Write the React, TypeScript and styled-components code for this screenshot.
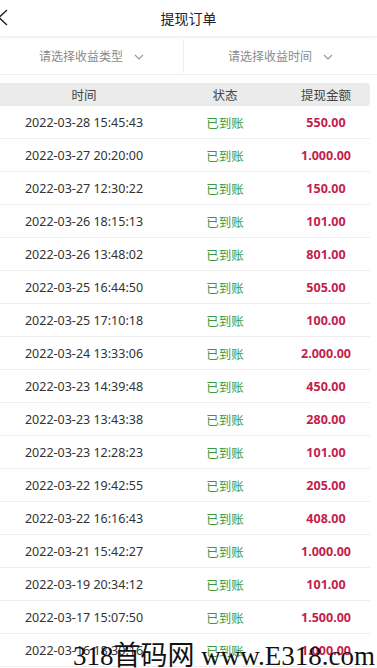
import React, { FunctionComponent } from 'react';
import styled, { createGlobalStyle } from 'styled-components';

const GlobalStyle = createGlobalStyle`
  html, body {
    margin: 0;
    padding: 0;
    background: #fff;
    overflow: hidden;
  }
  body {
    font-family: "Noto Sans", "Noto Sans CJK SC", sans-serif;
    color: #333;
  }
`;

type Order = {
  time: string;
  amount: string;
};

const orders: Order[] = [
  { time: '2022-03-28 15:45:43', amount: '550.00' },
  { time: '2022-03-27 20:20:00', amount: '1.000.00' },
  { time: '2022-03-27 12:30:22', amount: '150.00' },
  { time: '2022-03-26 18:15:13', amount: '101.00' },
  { time: '2022-03-26 13:48:02', amount: '801.00' },
  { time: '2022-03-25 16:44:50', amount: '505.00' },
  { time: '2022-03-25 17:10:18', amount: '100.00' },
  { time: '2022-03-24 13:33:06', amount: '2.000.00' },
  { time: '2022-03-23 14:39:48', amount: '450.00' },
  { time: '2022-03-23 13:43:38', amount: '280.00' },
  { time: '2022-03-23 12:28:23', amount: '101.00' },
  { time: '2022-03-22 19:42:55', amount: '205.00' },
  { time: '2022-03-22 16:16:43', amount: '408.00' },
  { time: '2022-03-21 15:42:27', amount: '1.000.00' },
  { time: '2022-03-19 20:34:12', amount: '101.00' },
  { time: '2022-03-17 15:07:50', amount: '1.500.00' },
  { time: '2022-03-16 18:30:16', amount: '1.000.00' },
];

const Page = styled.div`
    position: relative;
    width: 377px;
    height: 668px;
    overflow: hidden;
    background: #fff;
  `,
  NavBar = styled.header`
    position: relative;
    z-index: 2;
    height: 36px;
    display: flex;
    align-items: center;
    justify-content: center;
    background: #fff;
    box-shadow: 0 1px 3px rgba(0, 0, 0, 0.1);
  `,
  BackButton = styled.svg`
    position: absolute;
    left: -3px;
    top: 9px;
    width: 12px;
    height: 17px;
    fill: none;
    stroke: #222;
    stroke-width: 1.4px;
  `,
  Title = styled.h1`
    margin: 0;
    font-size: 14px;
    font-weight: 400;
    color: #222;
  `,
  FilterBar = styled.div`
    height: 37px;
    margin-top: 1px;
    display: grid;
    grid-template-columns: 184px 1fr;
    border-bottom: 1px solid #eee;
  `,
  FilterCell = styled.div<{ divided?: boolean }>`
    display: flex;
    align-items: center;
    justify-content: center;
    gap: 11px;
    margin: 2px 0 1px;
    font-size: 12px;
    color: #8a8a8a;
    border-right: ${(props) => (props.divided ? '1px solid #eee' : 'none')};
  `,
  Chevron = styled.svg`
    width: 10px;
    height: 6px;
    fill: none;
    stroke: #999;
    stroke-width: 1.1px;
    margin-top: 1px;
  `,
  Table = styled.div`
    width: 370px;
    margin-top: 8px;
  `,
  Columns = styled.div`
    display: grid;
    grid-template-columns: 168px 114px 88px;
    align-items: center;
  `,
  HeadRow = styled(Columns)`
    height: 23px;
    background: #ebebeb;
    border-radius: 0 4px 4px 0;
    font-size: 12.5px;
    color: #444;
  `,
  Row = styled(Columns)`
    height: 32px;
    border-bottom: 1px solid #eee;
  `,
  Cell = styled.div`
    text-align: center;
  `,
  TimeCell = styled(Cell)`
    font-size: 12.5px;
    color: #333;
  `,
  StatusCell = styled(Cell)`
    font-size: 12.5px;
    color: #3c9a3c;
  `,
  AmountCell = styled(Cell)`
    font-size: 12.5px;
    font-weight: 700;
    color: #c41d4c;
  `,
  Watermark = styled.div`
    position: absolute;
    left: 73px;
    bottom: -2px;
    z-index: 5;
    font-family: "Liberation Serif", "Noto Sans CJK SC", serif;
    font-size: 27px;
    line-height: 27px;
    color: #111;
    white-space: nowrap;
  `;

const OrderRow: FunctionComponent<{ order: Order }> = ({ order }) => (
  <Row>
    <TimeCell>{order.time}</TimeCell>
    <StatusCell>已到账</StatusCell>
    <AmountCell>{order.amount}</AmountCell>
  </Row>
);

const App: FunctionComponent = () => (
  <>
    <GlobalStyle />
    <Page>
      <NavBar>
        <BackButton viewBox="0 0 12 17">
          <polyline points="10 1 2 8.5 10 16" />
        </BackButton>
        <Title>提现订单</Title>
      </NavBar>
      <FilterBar>
        <FilterCell divided>
          请选择收益类型
          <Chevron viewBox="0 0 10 6">
            <polyline points="1 1 5 5 9 1" />
          </Chevron>
        </FilterCell>
        <FilterCell>
          请选择收益时间
          <Chevron viewBox="0 0 10 6">
            <polyline points="1 1 5 5 9 1" />
          </Chevron>
        </FilterCell>
      </FilterBar>
      <Table>
        <HeadRow>
          <Cell>时间</Cell>
          <Cell>状态</Cell>
          <Cell>提现金额</Cell>
        </HeadRow>
        {orders.map((o, i) => (
          <OrderRow key={i} order={o} />
        ))}
      </Table>
      <Watermark>318首码网 www.E318.com</Watermark>
    </Page>
  </>
);

export default App;
